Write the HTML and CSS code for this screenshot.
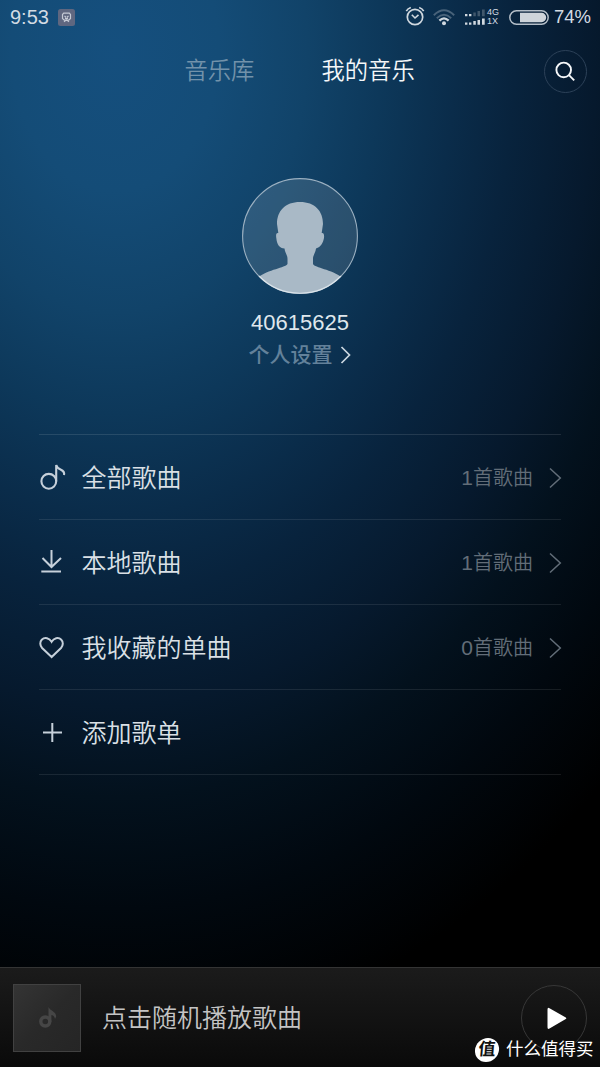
FILE: index.html
```html
<!DOCTYPE html>
<html lang="zh-CN">
<head>
<meta charset="utf-8">
<title>我的音乐</title>
<link rel="stylesheet" href="styles.css">
</head>
<body>
<div class="app">
  <div class="status">
    <span class="time">9:53</span>
    <svg class="notice" width="17" height="17" viewBox="0 0 17 17"><rect width="17" height="17" rx="2.5" fill="#5f6780"/><path d="M4.5 9.5V5.5L5.7 4.2H11.3L12.5 5.5V9.5L11 11H6ZM6.5 7L8 8.2M10.5 7L9 8.2M7 9.3H10M6 12.7L8.5 10.8L11 12.7" fill="none" stroke="#c5cad5" stroke-width="1.2"/></svg>
    <svg class="alarm" width="20" height="20" viewBox="0 0 20 20" fill="none" stroke="#d0d8df"><circle cx="10" cy="11" r="7.7" stroke-width="1.7"/><path d="M6.8 8.8L10 12L13.5 8.8" stroke-width="1.6"/><path d="M1.3 5.2Q2.5 2.7 5.8 1.5M18.7 5.2Q17.5 2.7 14.2 1.5" stroke-width="1.6"/></svg>
    <svg class="wifi" width="22" height="17" viewBox="0 0 22 17" fill="none" stroke-width="1.9"><path d="M.8 6.2Q11-3.6 21.2 6.2" stroke="#49637a"/><path d="M3.8 9.2Q11 2.4 18.2 9.2" stroke="#49637a"/><path d="M6.4 11.6Q11 7.2 15.6 11.6" stroke="#d0d8df" stroke-width="2.3"/><circle cx="11" cy="14.2" r="2" fill="#d0d8df" stroke="none"/></svg>
    <svg class="signal" width="22" height="17" viewBox="0 0 22 17" fill="#d0d8df"><path d="M1 5h2.4v2.2H1zM5 5h2.4v2.2H5zM1 13.5h2.4v2.3H1zM5 13.5h2.4v2.3H5zM9.3 12h2.5v3.8H9.3zM13.5 11h2.5v4.8h-2.5zM18 9.5h2.7v6.3H18z"/><path fill="#40576c" d="M9.3 3.5h2.5v3.7H9.3zM13.5 2h2.5v5.2h-2.5zM18 .5h2.7v6.7H18z"/></svg>
    <span class="network"><span>4G</span><span>1X</span></span>
    <svg class="battery" width="40" height="15" viewBox="0 0 40 15"><rect x=".8" y=".8" width="38.4" height="13.4" rx="6.7" fill="none" stroke="#b4bec8" stroke-width="1.5"/><path d="M11 2.8H32.5A4.7 4.7 0 0 1 32.5 12.2H11Z" fill="#ced4da"/></svg>
    <span class="percent">74%</span>
  </div>
  <header class="tabs">
    <span class="tab">音乐库</span>
    <span class="tab tab-active">我的音乐</span>
    <button class="search" aria-label="搜索"><svg width="41" height="41" viewBox="0 0 41 41" fill="none" stroke="#f6f8fa" stroke-width="1.9"><circle cx="18.7" cy="18.9" r="7.3"/><path d="M24 24.2L29.2 29.4"/></svg></button>
  </header>
  <section class="profile">
    <svg class="avatar" width="116" height="116" viewBox="0 0 116 116"><defs><clipPath id="disc"><circle cx="58" cy="58" r="57.4"/></clipPath></defs><circle cx="58" cy="58" r="57.4" fill="#fff" fill-opacity=".12"/><path clip-path="url(#disc)" fill="#a9b9c6" d="M58 24C43 24 35 33 35 46L36.3 55C33.6 54.5 34 58 34.3 60C35 67 37.5 70 42.5 70.5C43 75 45.5 77 45.5 81V86C43 90 27 91 15 100V118H101V100C89 91 73 90 71 86V81C71 77 73.5 75 74 70.5C79 69 81 65 82 60C82.3 57 82 54.5 79.7 55L81 46C81 33 73 24 58 24Z"/><circle cx="58" cy="58" r="57.4" fill="none" stroke="#9bb0c1" stroke-width="1.1"/><path d="M17 98A57.4 57.4 0 0 0 99 98" fill="none" stroke="#dce4ea" stroke-width="1.1"/></svg>
    <div class="user">40615625</div>
    <div class="settings"><span>个人设置</span><svg width="12" height="20" viewBox="0 0 12 20" fill="none" stroke="#ccd8e1" stroke-width="1.7"><path d="M1.5 2L9.5 10L1.5 18"/></svg></div>
  </section>
  <main class="list">
    <div class="row">
      <svg class="icon" width="28" height="30" viewBox="0 0 28 30" fill="none" stroke="#c6d0da" stroke-width="2.1"><circle cx="9.8" cy="18.3" r="7.4"/><path d="M17.2 18.3V2Q18 4.9 21.5 6.5Q26 8.5 25 12"/></svg>
      <span class="label">全部歌曲</span><span class="count"><b>1</b>首歌曲</span>
      <svg class="arrow" width="13" height="22" viewBox="0 0 13 22"><path d="M1 1.5L11.3 11L1 20.5"/></svg>
    </div>
    <div class="row">
      <svg class="icon" width="28" height="30" viewBox="0 0 28 30" fill="none" stroke="#c6d0da" stroke-width="2"><path d="M12.5 2V18.5M3.5 10L12.5 19L22 10M2.3 23.5H22"/></svg>
      <span class="label">本地歌曲</span><span class="count"><b>1</b>首歌曲</span>
      <svg class="arrow" width="13" height="22" viewBox="0 0 13 22"><path d="M1 1.5L11.3 11L1 20.5"/></svg>
    </div>
    <div class="row">
      <svg class="icon" width="28" height="30" viewBox="0 0 28 30" fill="none" stroke="#c6d0da" stroke-width="2"><path d="M12.6 24L3.1 15C.8 12.4.7 8.7 2.7 6.7C6 3.6 10.3 5.1 12.6 8.8C14.9 5.1 19.2 3.6 22.3 6.7C24.4 8.7 24.3 12.4 22 15Z"/></svg>
      <span class="label">我收藏的单曲</span><span class="count"><b>0</b>首歌曲</span>
      <svg class="arrow" width="13" height="22" viewBox="0 0 13 22"><path d="M1 1.5L11.3 11L1 20.5"/></svg>
    </div>
    <div class="row">
      <svg class="icon" width="28" height="30" viewBox="0 0 28 30" fill="none" stroke="#c6d0da" stroke-width="2"><path d="M13.3 5V24M4 14.5H23"/></svg>
      <span class="label">添加歌单</span>
    </div>
  </main>
  <footer class="player">
    <div class="cover"><svg width="19" height="24" viewBox="0 0 19 24" fill="none" stroke="#464646"><circle cx="7.3" cy="15.5" r="4.5" stroke-width="3.4"/><path d="M10.5 1C12 5 18 5 18.2 10.5L17 13C16.5 10 15 9.5 13.4 9V16H10.5Z" fill="#464646" stroke="none"/></svg></div>
    <span class="prompt">点击随机播放歌曲</span>
    <button class="play" aria-label="播放"><svg width="64" height="64" viewBox="0 0 64 64"><path d="M25.5 23.5Q25.5 21 27.5 22.2L43.8 31.5Q44.8 32.3 43.8 33.1L27.5 42.6Q25.5 43.8 25.5 41.2Z" fill="#fff"/></svg></button>
  </footer>
  <div class="watermark"><span class="seal">值</span><span>什么值得买</span></div>
</div>
</body>
</html>
```
FILE: styles.css
```css
* { box-sizing: border-box; }
body { margin: 0; background: #000; }
button { padding: 0; background: none; }
svg { display: block; flex: none; }
.app {
  position: relative;
  width: 600px;
  height: 1067px;
  display: flex;
  flex-direction: column;
  overflow: hidden;
  font-family: "Liberation Sans", "Noto Sans CJK SC", sans-serif;
  font-weight: 350;
  background: radial-gradient(ellipse 740px 1010px at 115px 50px, #154f7e 0%, #144c77 14%, #114369 26%, #0d385a 36%, #0a2c4a 46%, #08233d 54%, #06192d 65%, #03111d 74%, #01080f 85%, #000 98%);
}
.status { height: 34px; display: flex; align-items: center; padding-left: 10px; color: #d3dbe3; }
.time { width: 48px; font-size: 20px; line-height: 34px; }
.alarm { margin-left: 330px; margin-top: -2px; }
.wifi { margin-left: 8px; margin-top: 1px; }
.signal { margin-left: 9px; }
.network { display: flex; flex-direction: column; width: 15px; margin-left: 1px; font-size: 9px; line-height: 9px; }
.battery { margin-left: 7px; }
.percent { margin-left: 5px; font-size: 18.5px; line-height: 34px; }
.tabs { height: 74px; display: flex; align-items: center; padding-left: 184.5px; color: #fff; font-size: 23.3px; }
.tab { width: 137px; line-height: 34px; color: #7292aa; white-space: nowrap; }
.tab-active { width: 222px; color: #f4f7f9; }
.search { width: 43px; height: 43px; border: 1px solid #2c4158; border-radius: 50%; }
.profile { height: 326px; padding-top: 70px; display: flex; flex-direction: column; align-items: center; }
.user { margin-top: 13px; font-size: 22px; line-height: 32px; color: #dfe7ed; }
.settings { display: flex; align-items: center; gap: 7px; line-height: 32px; font-size: 21px; font-weight: 500; color: #63819a; }
.list { width: 522px; margin-left: 39px; border-top: 1px solid rgba(255,255,255,.11); }
.row { height: 85px; display: flex; align-items: center; border-bottom: 1px solid rgba(255,255,255,.09); }
.icon { margin-top: 1px; }
.label { margin-left: 14.5px; padding-top: 1px; font-size: 25px; line-height: 36px; color: #dae0e6; }
.count { margin-left: auto; margin-right: 16px; padding-top: 1px; display: flex; align-items: baseline; font-size: 20px; line-height: 32px; color: #626d78; }
.count b { font-weight: 400; font-size: 21px; }
.arrow { fill: none; stroke: #626d78; stroke-width: 1.5; margin-top: 2px; margin-right: -1px; }
.player { height: 100px; margin-top: auto; padding: 0 13px; display: flex; align-items: center; border-top: 1px solid #343434; background: linear-gradient(#1b1b1b, #0a0a0a); }
.cover { width: 68px; height: 68px; display: grid; place-items: center; border: 1px solid #414141; background: linear-gradient(135deg, #343434, #292929 50%, #252525); }
.prompt { margin-left: 21px; padding-top: 1px; font-size: 25px; line-height: 36px; color: #c4c4c4; }
.play { width: 66px; height: 66px; margin-left: auto; border: 1px solid #373737; border-radius: 50%; }
.watermark { position: absolute; left: 475px; top: 1037px; display: flex; align-items: center; gap: 7px; color: #fff; font-size: 17.5px; line-height: 25px; font-weight: 400; white-space: nowrap; }
.seal { width: 24px; height: 24px; border-radius: 50%; background: #fff; color: #111; font-size: 17px; line-height: 23px; font-weight: 700; text-align: center; transform: skewX(-5deg); }
```
